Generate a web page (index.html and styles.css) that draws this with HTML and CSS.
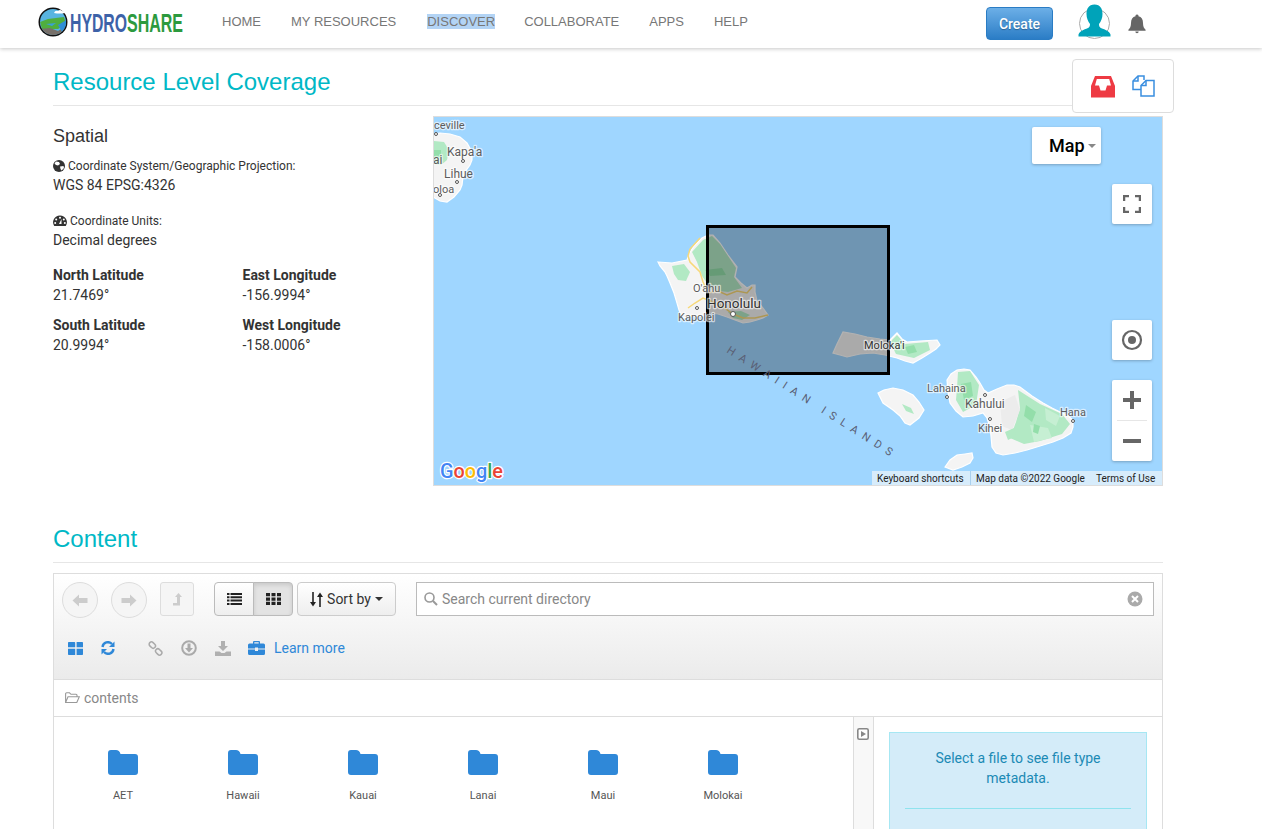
FILE: index.html
```html
<!DOCTYPE html>
<html lang="en">
<head>
<meta charset="utf-8">
<title>HydroShare - Resource Level Coverage</title>
<link rel="stylesheet" href="styles.css">
</head>
<body>
<header class="navbar">
  <a class="logo">
    <svg class="logo-svg" width="146" height="34" viewBox="0 0 146 34">
      <defs><clipPath id="globe"><circle cx="15" cy="17" r="13"/></clipPath></defs>
      <circle cx="15" cy="17" r="14.500" fill="#111"/>
      <g clip-path="url(#globe)">
        <rect x="0" y="3" width="30" height="28" fill="#58b4e0"/>
        <path d="M2 17 L10 14 L26 12 L28 19 L20 24 L4 24Z" fill="#4fae3f"/>
        <path d="M2 24 L12 23 L20 26 L28 21 L28 33 L2 33Z" fill="#77706a"/>
        <path d="M20 20 L30 14 L30 27 L24 27Z" fill="#2f8fd8"/>
        <path d="M8 19 L18 18 L14 21Z" fill="#3aa0d8"/>
      </g>
      <path d="M16 8 q1 -3 4 -2 q2 -2 4 0 q3 0 3 2 q-5 1 -11 0Z" fill="#fff"/>
      <text class="logo-text logo-hydro" x="32" y="27" textLength="57" lengthAdjust="spacingAndGlyphs">HYDRO</text>
      <text class="logo-text logo-share" x="89" y="27" textLength="56" lengthAdjust="spacingAndGlyphs">SHARE</text>
    </svg>
  </a>
  <nav class="nav-links">
    <a class="nav-link">HOME</a>
    <a class="nav-link">MY RESOURCES</a>
    <a class="nav-link"><span class="selected">DISCOVER</span></a>
    <a class="nav-link">COLLABORATE</a>
    <a class="nav-link">APPS</a>
    <a class="nav-link">HELP</a>
  </nav>
  <div class="nav-right">
    <button class="btn-create">Create</button>
    <svg class="user-icon" width="34" height="36" viewBox="0 0 34 36">
      <circle cx="16.500" cy="19.500" r="15" fill="#fff" stroke="#aaa" stroke-width="1"/>
      <path d="M16.500 0.500 C22.500 0.500 24.500 5 24.500 10 C24.500 14 23 17.500 21 20 C21 22 21.500 23.500 24 24.500 C28 26 31 27 32.500 30.500 L32.500 32.500 L0.500 32.500 L0.500 30.500 C2 27 5 26 9 24.500 C11.500 23.500 12 22 12 20 C10 17.500 8.500 14 8.500 10 C8.500 5 10.500 0.500 16.500 0.500Z" fill="#00a3b9"/>
    </svg>
    <svg class="bell-icon" width="18" height="20" viewBox="0 0 18 20">
      <path d="M9 0.500 a1.500 1.500 0 0 1 1.500 1.800 C13.500 3 15 5.500 15 9 C15 12.500 16 14.300 17.600 15.800 L17.600 16.700 L0.400 16.700 L0.400 15.800 C2 14.300 3 12.500 3 9 C3 5.500 4.500 3 7.500 2.300 A1.500 1.500 0 0 1 9 0.500Z" fill="#666"/>
      <path d="M7.300 17.500 h3.400 a1.700 1.700 0 0 1 -3.400 0Z" fill="#666"/>
    </svg>
  </div>
</header>

<aside class="float-tools">
  <svg class="inbox-icon" width="24" height="22" viewBox="0 0 24 22">
    <path d="M4 0 H20 L24 10 V21.500 H0 V10Z" fill="#ee3a43"/>
    <path d="M5.800 3 H18.200 L20 9.500 H16 L14.500 14.500 H9.500 L8 9.500 H4Z" fill="#fff"/>
  </svg>
  <svg width="23" height="22" viewBox="0 0 23 22" class="copy-icon">
    <path d="M11 14.500 H1 V6 L6 1 H12 V5"/>
    <path d="M6 1 V6 H1"/>
    <path d="M9 21 H22 V5.500 H14 L9 10.500Z" fill="#fff"/>
    <path d="M14 5.500 V10.500 H9"/>
  </svg>
</aside>

<main class="page">
  <h2 class="section-title first">Resource Level Coverage</h2>
  <section class="coverage">
    <div class="spatial">
      <h3 class="spatial-title">Spatial</h3>
      <div class="field-label">
        <svg width="12" height="12" viewBox="0 0 12 12"><circle cx="6" cy="6" r="6" fill="#333"/><path d="M3 1.500 L6 2 L7 4 L5 5.500 L3 5 L1.500 3.500Z M7 6.500 L10.500 6 L11 8 L8.500 10.500 L7.500 9Z" fill="#fff"/></svg>
        Coordinate System/Geographic Projection:
      </div>
      <div class="field-value">WGS 84 EPSG:4326</div>
      <div class="field-label units">
        <svg width="14" height="12" viewBox="0 0 14 12"><path d="M7 0.500 A6.800 6.800 0 0 1 12.800 11 H1.200 A6.800 6.800 0 0 1 7 0.500Z" fill="#333"/><circle cx="7" cy="2.800" r="1" fill="#fff"/><circle cx="3.200" cy="4.500" r="1" fill="#fff"/><circle cx="10.800" cy="4.500" r="1" fill="#fff"/><circle cx="2.200" cy="8" r="1" fill="#fff"/><circle cx="11.800" cy="8" r="1" fill="#fff"/><path d="M6 9 L8.500 4 L8.500 9Z" fill="#fff"/></svg>
        Coordinate Units:
      </div>
      <div class="field-value">Decimal degrees</div>
      <div class="coords">
        <div><div class="coord-name">North Latitude</div><div class="coord-value">21.7469°</div></div>
        <div><div class="coord-name">East Longitude</div><div class="coord-value">-156.9994°</div></div>
        <div><div class="coord-name">South Latitude</div><div class="coord-value">20.9994°</div></div>
        <div><div class="coord-name">West Longitude</div><div class="coord-value">-158.0006°</div></div>
      </div>
    </div>

    <div class="map">
      <svg class="map-canvas" width="730" height="370" viewBox="433 116 730 370">
        <defs><filter id="soft" x="-5%" y="-5%" width="110%" height="110%"><feGaussianBlur stdDeviation="0.700"/></filter></defs>
        <rect x="433" y="116" width="730" height="370" fill="#9fd6ff"/>
        <g filter="url(#soft)">
          <!-- Kauai -->
          <path class="land" d="M433 134 L440 133 L450 134 L460 137 L467 143 L472 152 L472 160 L470 165 L465 172 L463 177 L462 185 L460 190 L454 197 L447 202 L440 201 L433 197Z"/>
          <path class="green" d="M434 141 L444 142 L449 150 L447 160 L441 165 L434 164Z"/>
          <path class="green-dark" d="M434 150 L441 150 L441 157 L434 158Z"/>
          <!-- Oahu -->
          <path class="land" d="M658 262 L672 263 L687 260 L689 254 L694 246 L702 238 L708 235 L713 235 L720 243 L728 255 L737 267 L735 277 L741 283 L747 288 L752 285 L755 285 L755 292 L757 301 L763 308 L768 315 L763 318 L757 320 L750 322 L743 323 L735 320 L727 317 L718 314 L710 313 L703 316 L697 317 L690 316 L683 318 L679 310 L677 303 L674 293 L670 283 L667 276 L665 272 L660 266Z"/>
          <path class="green" d="M692 252 L703 240 L712 236 L720 244 L736 268 L734 277 L742 288 L728 292 L712 290 L702 276 L697 262Z"/>
          <path class="green-dark" d="M705 270 L722 268 L726 275 L710 276Z"/>
          <path class="green" d="M672 266 L684 264 L690 272 L686 281 L678 280 L674 274Z"/>
          <path class="green" d="M728 312 L741 311 L750 315 L742 320 L733 318Z"/>
          <path class="road" d="M700 238 L690 249 L688 256 L690 262 L700 272 L703 282 L708 293 L718 291 L727 295 L737 291 L747 293 L752 287 M688 308 L695 303 L703 298 L713 302 L723 307 L733 314 L743 318 L755 318 L768 315"/>
          <!-- Molokai -->
          <path class="land" d="M833 353 L837 344 L843 332 L855 334 L867 337 L880 339 L890 340 L897 333 L902 339 L907 342 L920 341 L937 340 L940 345 L936 349 L930 353 L922 358 L913 363 L905 361 L897 358 L885 355 L873 353 L860 354 L847 357 L840 355Z"/>
          <path class="green" d="M890 342 L897 335 L905 344 L928 342 L930 350 L914 358 L896 354Z"/>
          <path class="green-dark" d="M905 347 L914 345 L917 352 L908 354Z"/>
          <!-- Lanai -->
          <path class="land" d="M878 393 L884 390 L893 388 L903 390 L913 395 L919 402 L924 410 L919 418 L910 425 L905 423 L900 416 L893 410 L883 403Z"/>
          <path class="green" d="M902 404 L911 408 L914 414 L906 411Z"/>
          <!-- Maui -->
          <path class="land" d="M947 380 L951 374 L957 370 L964 369 L970 370 L976 377 L980 383 L984 390 L988 393 L997 389 L1007 385 L1014 385 L1020 387 L1032 396 L1043 403 L1052 408 L1060 412 L1067 415 L1073 420 L1073 427 L1071 433 L1063 438 L1053 442 L1040 446 L1027 450 L1015 453 L1003 455 L996 453 L992 447 L991 436 L990 427 L987 418 L983 413 L973 416 L963 417 L956 411 L950 403 L948 392Z"/>
          <path class="green" d="M958 372 L970 371 L979 385 L976 405 L963 412 L956 400 L957 388Z"/>
          <path class="green-dark" d="M961 384 L971 382 L973 396 L964 400Z"/>
          <path class="green" d="M1018 390 L1040 404 L1062 414 L1070 424 L1062 434 L1040 441 L1024 444 L1010 438 L1016 422 L1020 408Z"/>
          <path class="green-light" d="M1030 425 L1048 428 L1052 438 L1034 442Z M1045 408 L1060 416 L1056 426 L1046 420Z"/>
          <path class="green-dark" d="M1026 405 L1036 412 L1032 422 L1024 416Z M1034 424 L1040 426 L1038 434 L1033 432Z"/>
          <path class="grey-patch" d="M1000 402 L1015 395 L1020 410 L1012 430 L1002 426Z"/>
          <path class="green" d="M1005 432 L1014 428 L1016 436 L1008 440Z"/>
          <!-- Kahoolawe -->
          <path class="land" d="M945 467 L950 460 L957 455 L965 454 L972 453 L973 458 L970 463 L962 467 L953 470Z"/>
        </g>

        <rect x="707.500" y="226.500" width="181" height="147" fill="#000" fill-opacity="0.3" stroke="#000" stroke-width="3"/>

        <text class="place small" x="434" y="129">ceville</text>
        <text class="place mid" x="447" y="156">Kapa'a</text>
        <text class="place mid" x="444" y="178">Lihue</text>
        <text class="place small" x="433" y="193">oloa</text>
        <text class="place mid" x="433" y="164">ai</text>
        <circle class="dot" cx="463" cy="161" r="1.500"/><circle class="dot" cx="457" cy="182" r="1.500"/><circle class="dot" cx="440" cy="195" r="1.500"/><circle class="dot" cx="436" cy="134" r="1.500"/>
        <text class="place small" x="693" y="292">O'ahu</text>
        <text class="place big" x="707" y="308">Honolulu</text>
        <text class="place small" x="678" y="321">Kapolei</text>
        <circle class="dot" cx="733" cy="314" r="2.500"/><circle class="dot" cx="697" cy="308" r="1.500"/>
        <text class="place small dark" x="864" y="349">Moloka'i</text>
        <text class="place small" x="927" y="392">Lahaina</text>
        <text class="place mid" x="965" y="408">Kahului</text>
        <text class="place small" x="978" y="432">Kihei</text>
        <text class="place small" x="1060" y="416">Hana</text>
        <circle class="dot" cx="947" cy="397" r="1.500"/><circle class="dot" cx="985" cy="395" r="1.500"/><circle class="dot" cx="990" cy="419" r="1.500"/><circle class="dot" cx="1073" cy="421" r="1.500"/>
        <path id="arc" d="M726 352 L902 464" fill="none"/>
        <text class="islands"><textPath href="#arc">HAWAIIAN ISLANDS</textPath></text>
        <text class="google" x="440" y="478" textLength="63" lengthAdjust="spacingAndGlyphs"><tspan fill="#4285f4">G</tspan><tspan fill="#ea4335">o</tspan><tspan fill="#fbbc05">o</tspan><tspan fill="#4285f4">g</tspan><tspan fill="#34a853">l</tspan><tspan fill="#ea4335">e</tspan></text>
      </svg>

      <div class="map-type">Map<span class="caret"></span></div>
      <div class="map-btn fullscreen">
        <svg width="18" height="18" viewBox="0 0 18 18"><path d="M1 6V1H6M12 1H17V6M17 12V17H12M6 17H1V12" fill="none" stroke="#666" stroke-width="2.500"/></svg>
      </div>
      <div class="map-btn locate">
        <svg width="22" height="22" viewBox="0 0 22 22"><circle cx="11" cy="11" r="9" fill="none" stroke="#666" stroke-width="2.200"/><circle cx="11" cy="11" r="4" fill="#666"/></svg>
      </div>
      <div class="zoom-ctl">
        <div class="zoom-btn"><svg width="18" height="18" viewBox="0 0 18 18"><path d="M0 9H18M9 0V18" stroke="#666" stroke-width="4"/></svg></div>
        <div class="zoom-sep"></div>
        <div class="zoom-btn"><svg width="18" height="4" viewBox="0 0 18 4"><path d="M0 2H18" stroke="#666" stroke-width="4"/></svg></div>
      </div>
      <div class="credits">
        <span class="credit shortcuts">Keyboard shortcuts</span>
        <span class="credit">Map data ©2022 Google</span>
        <span class="credit terms">Terms of Use</span>
      </div>
    </div>
  </section>

  <h2 class="section-title second">Content</h2>

  <section class="browser">
    <div class="toolbar">
      <div class="tool-row">
        <button class="round-btn"><svg width="16" height="13" viewBox="0 0 16 13"><path d="M7 0.500 L0.500 6.500 L7 12.500 V9 H15.500 V4 H7Z" fill="#ccc"/></svg></button>
        <button class="round-btn next"><svg width="16" height="13" viewBox="0 0 16 13"><path d="M9 0.500 L15.500 6.500 L9 12.500 V9 H0.500 V4 H9Z" fill="#ccc"/></svg></button>
        <button class="up-btn"><svg width="9" height="13" viewBox="0 0 9 13"><path d="M5.500 0 L9 4 H7 V12.500 H0 L0 10 H4 V4 H2Z" fill="#ccc"/></svg></button>
        <div class="view-group">
          <button class="view-btn"><svg width="15" height="12" viewBox="0 0 15 12"><path d="M0 1H2.500M3.500 1H15M0 4.300H2.500M3.500 4.300H15M0 7.600H2.500M3.500 7.600H15M0 11H2.500M3.500 11H15" stroke="#222" stroke-width="2"/></svg></button>
          <button class="view-btn active"><svg width="15" height="12" viewBox="0 0 15 12"><path d="M0 0h4v3.300h-4zM5.500 0h4v3.300h-4zM11 0h4v3.300h-4zM0 4.400h4v3.300h-4zM5.500 4.400h4v3.300h-4zM11 4.400h4v3.300h-4zM0 8.700h4v3.300h-4zM5.500 8.700h4v3.300h-4zM11 8.700h4v3.300h-4z" fill="#222"/></svg></button>
        </div>
        <button class="sort-btn">
          <svg width="13" height="15" viewBox="0 0 13 15"><path d="M3 0V11" stroke="#222" stroke-width="1.600"/><path d="M0 10H6L3 14.500Z" fill="#222"/><path d="M10 15V4" stroke="#222" stroke-width="1.600"/><path d="M7 5H13L10 0.500Z" fill="#222"/></svg>
          Sort by<span class="caret dark"></span>
        </button>
        <div class="search">
          <svg width="14" height="14" viewBox="0 0 14 14"><circle cx="5.500" cy="5.500" r="4.500" fill="none" stroke="#999" stroke-width="1.600"/><path d="M9 9L13 13" stroke="#999" stroke-width="2"/></svg>
          <span class="search-text">Search current directory</span>
          <svg class="search-clear" width="16" height="16" viewBox="0 0 16 16"><circle cx="8" cy="8" r="7.500" fill="#aaa"/><path d="M5 5L11 11M11 5L5 11" stroke="#fff" stroke-width="2"/></svg>
        </div>
      </div>
      <div class="action-row">
        <svg class="act-apps" width="15" height="13" viewBox="0 0 15 13"><path d="M0.800 0h5.600a.8.8 0 0 1 .8.8v4.400h-7.200v-4.400a.8.8 0 0 1 .8-.8zM8.600 0h5.600a.8.8 0 0 1 .8.8v4.400h-6.400v-5.200zM0 6.800h7.200v6.200h-6.400a.8.8 0 0 1-.8-.8zM8.600 6.800h6.400v5.400a.8.8 0 0 1-.8.8h-5.600z" fill="#2f88d8"/></svg>
        <svg class="act-refresh" width="14" height="14" viewBox="0 0 14 14"><path d="M1.500 6 A5.500 5.500 0 0 1 11 3" fill="none" stroke="#2f88d8" stroke-width="2.400"/><path d="M13.500 0.500 V6 H8Z" fill="#2f88d8"/><path d="M12.500 8 A5.500 5.500 0 0 1 3 11" fill="none" stroke="#2f88d8" stroke-width="2.400"/><path d="M0.500 13.500 V8 H6Z" fill="#2f88d8"/></svg>
        <svg class="act-link" width="15" height="15" viewBox="0 0 15 15"><rect x="0.800" y="1.800" width="7" height="4.600" rx="2.300" transform="rotate(45 4.300 4.100)" fill="none" stroke="#aaa" stroke-width="1.500"/><rect x="7.200" y="8.600" width="7" height="4.600" rx="2.300" transform="rotate(45 10.700 10.900)" fill="none" stroke="#aaa" stroke-width="1.500"/></svg>
        <svg class="act-down" width="16" height="16" viewBox="0 0 16 16"><circle cx="8" cy="8" r="6.800" fill="none" stroke="#aaa" stroke-width="2"/><path d="M6.500 3.500H9.500V8H12L8 12.500L4 8H6.500Z" fill="#aaa"/></svg>
        <svg class="act-save" width="16" height="15" viewBox="0 0 16 15"><path d="M6 0H10V5H13L8 10L3 5H6Z M0 10.500H4.500L6.500 12H9.500L11.500 10.500H16V15H0Z" fill="#b0b0b0"/></svg>
        <svg class="act-case" width="17" height="14" viewBox="0 0 17 14"><path d="M6 0H11A1 1 0 0 1 12 1V2.500H15.500A1.500 1.500 0 0 1 17 4V7.500H10V6.500H7V7.500H0V4A1.500 1.500 0 0 1 1.500 2.500H5V1A1 1 0 0 1 6 0ZM6.300 1.300V2.500H10.700V1.300Z M0 8.500H7V10H10V8.500H17V12.500A1.500 1.500 0 0 1 15.500 14H1.500A1.500 1.500 0 0 1 0 12.500Z" fill="#2f88d8" fill-rule="evenodd"/></svg>
        <a class="learn-more">Learn more</a>
      </div>
    </div>

    <div class="crumbs">
      <svg width="15" height="12" viewBox="0 0 15 12"><path d="M0.600 10.500V1.800A1 1 0 0 1 1.600 0.800H4.500L6 2.300H11A1 1 0 0 1 12 3.300V4.800M0.600 10.500L3 4.800H14.300L11.800 10.500Z" fill="none" stroke="#999" stroke-width="1.100"/></svg>
      contents
    </div>

    <div class="browser-body">
      <div class="files">
        <div class="file"><svg class="folder" width="30" height="25" viewBox="0 0 30 25"><path d="M3 0H8C10 0 12 1.500 12.500 4H27A3 3 0 0 1 30 7V22A3 3 0 0 1 27 25H3A3 3 0 0 1 0 22V3A3 3 0 0 1 3 0Z"/></svg><span class="file-name">AET</span></div>
        <div class="file"><svg class="folder" width="30" height="25" viewBox="0 0 30 25"><path d="M3 0H8C10 0 12 1.500 12.500 4H27A3 3 0 0 1 30 7V22A3 3 0 0 1 27 25H3A3 3 0 0 1 0 22V3A3 3 0 0 1 3 0Z"/></svg><span class="file-name">Hawaii</span></div>
        <div class="file"><svg class="folder" width="30" height="25" viewBox="0 0 30 25"><path d="M3 0H8C10 0 12 1.500 12.500 4H27A3 3 0 0 1 30 7V22A3 3 0 0 1 27 25H3A3 3 0 0 1 0 22V3A3 3 0 0 1 3 0Z"/></svg><span class="file-name">Kauai</span></div>
        <div class="file"><svg class="folder" width="30" height="25" viewBox="0 0 30 25"><path d="M3 0H8C10 0 12 1.500 12.500 4H27A3 3 0 0 1 30 7V22A3 3 0 0 1 27 25H3A3 3 0 0 1 0 22V3A3 3 0 0 1 3 0Z"/></svg><span class="file-name">Lanai</span></div>
        <div class="file"><svg class="folder" width="30" height="25" viewBox="0 0 30 25"><path d="M3 0H8C10 0 12 1.500 12.500 4H27A3 3 0 0 1 30 7V22A3 3 0 0 1 27 25H3A3 3 0 0 1 0 22V3A3 3 0 0 1 3 0Z"/></svg><span class="file-name">Maui</span></div>
        <div class="file"><svg class="folder" width="30" height="25" viewBox="0 0 30 25"><path d="M3 0H8C10 0 12 1.500 12.500 4H27A3 3 0 0 1 30 7V22A3 3 0 0 1 27 25H3A3 3 0 0 1 0 22V3A3 3 0 0 1 3 0Z"/></svg><span class="file-name">Molokai</span></div>
      </div>
      <div class="splitter">
        <svg width="12" height="12" viewBox="0 0 12 12"><rect x="0.800" y="0.800" width="10.400" height="10.400" rx="1.500" fill="#fff" stroke="#888" stroke-width="1.600"/><path d="M4 3L9 6L4 9Z" fill="#888"/></svg>
      </div>
      <div class="meta">
        <div class="meta-alert">
          <p class="meta-text">Select a file to see file type metadata.</p>
          <hr class="meta-rule">
        </div>
      </div>
    </div>
  </section>
</main>
</body>
</html>
```

FILE: styles.css
```css
* { box-sizing: border-box; }
html, body { height: 100%; margin: 0; overflow: hidden; background: #fff; }
body { font-family: Roboto, "Liberation Sans", sans-serif; font-size: 14px; color: #333; position: relative; }
button { font-family: inherit; margin: 0; padding: 0; }

.navbar { height: 48px; display: flex; align-items: center; padding-left: 38px; background: #fff; box-shadow: 0 1px 4px rgba(0,0,0,.22); position: relative; z-index: 2; }
.logo { width: 169px; height: 34px; display: block; margin-top: -4px; }
.logo-svg { overflow: visible; }
.logo-text { font-family: "Liberation Sans", sans-serif; font-weight: 700; font-size: 26px; }
.logo-hydro { fill: #3d62a8; }
.logo-share { fill: #2c9a3e; }
.nav-links { display: flex; font-family: "Liberation Sans", Arial, sans-serif; font-size: 13px; color: #777; margin-top: -5px; }
.nav-link { padding: 0 15px; line-height: 20px; }
.selected { background: #b3d4f5; margin-left: 1px; margin-right: -1px; }
.nav-right { margin-left: auto; display: flex; align-items: center; margin-right: 116px; margin-top: -4px; }
.btn-create { width: 67px; height: 33px; border: 1px solid #2a7cc4; border-radius: 4px; background: linear-gradient(#6cafe7, #2b7dc6); color: #fff; font-size: 14px; font-weight: 500; text-shadow: 0 1px 1px rgba(0,0,0,.3); margin-top: 3px; }
.user-icon { margin-left: 25px; }
.bell-icon { margin-left: 16px; margin-top: 4px; }

.float-tools { position: absolute; left: 1072px; top: 59px; width: 102px; height: 54px; display: flex; align-items: center; gap: 17px; padding-left: 18px; background: #fff; border: 1px solid #ddd; border-radius: 4px; z-index: 3; }
.inbox-icon { margin-top: 2px; }
.copy-icon { fill: none; stroke: #3a8ee0; stroke-width: 1.500; }

.page { width: 1110px; margin-left: 53px; }
.section-title { margin: 0; font-family: "Liberation Sans", Arial, sans-serif; font-weight: 400; font-size: 24px; line-height: 26px; color: #00b8c6; padding-bottom: 10px; border-bottom: 1px solid #e6e6e6; }
.section-title.first { margin-top: 21px; }
.section-title.second { margin-top: 40px; }

.coverage { display: flex; margin-top: 10px; }
.spatial { width: 380px; flex: none; }
.spatial-title { margin: 9px 0 0; font-family: "Liberation Sans", Arial, sans-serif; font-weight: 400; font-size: 18px; line-height: 22px; color: #333; }
.field-label { margin-top: 10px; font-size: 12px; line-height: 18px; color: #333; display: flex; align-items: center; gap: 3px; height: 18px; }
.field-label.units { margin-top: 17px; }
.field-value { font-size: 14px; line-height: 20px; color: #333; }
.coords { display: grid; grid-template-columns: 189.500px 1fr; row-gap: 10px; margin-top: 15px; }
.coord-name { font-weight: 700; font-size: 14px; line-height: 20px; }
.coord-value { font-size: 14px; line-height: 20px; }

.map { position: relative; width: 730px; height: 370px; flex: none; overflow: hidden; }
.map::after { content: ""; position: absolute; inset: 0; box-shadow: inset 0 0 0 1px #ddd; pointer-events: none; }
.map-canvas { display: block; }
.land { fill: #f4f4f4; stroke: #fff; stroke-width: 1.200; }
.green { fill: #b2e9c4; }
.green-dark { fill: #93deaa; }
.green-light { fill: #c6efd3; }
.grey-patch { fill: #ececec; }
.road { fill: none; stroke: #f7d878; stroke-width: 1.500; }
.place { font-family: Roboto, sans-serif; fill: #5c5c5c; stroke: #fff; stroke-width: 2.500; stroke-opacity: .6; paint-order: stroke; stroke-linejoin: round; }
.place.small { font-size: 11px; }
.place.mid { font-size: 12px; }
.place.big { font-size: 13.500px; fill: #333; }
.place.dark { fill: #333; }
.dot { fill: #fff; stroke: #555; stroke-width: 1; }
.islands { font-family: Roboto, sans-serif; font-size: 11px; letter-spacing: 6.300px; fill: #5a5f75; }
.google { font-family: Roboto, sans-serif; font-size: 21px; font-weight: 500; stroke: #fff; stroke-width: 2.500; paint-order: stroke; stroke-linejoin: round; }

.map-type { position: absolute; left: 599px; top: 11px; width: 69px; height: 37px; background: #fff; border-radius: 2px; box-shadow: 0 1px 3px rgba(0,0,0,.25); font-size: 18px; font-weight: 500; color: #000; display: flex; align-items: center; padding-left: 17px; }
.caret { display: inline-block; border-left: 4px solid transparent; border-right: 4px solid transparent; border-top: 4px solid #888; margin-left: 3px; }
.caret.dark { border-top-color: #333; margin-left: 0; }
.map-btn { position: absolute; left: 679px; width: 40px; height: 40px; background: #fff; border-radius: 2px; box-shadow: 0 1px 3px rgba(0,0,0,.25); display: flex; align-items: center; justify-content: center; }
.fullscreen { top: 68px; }
.locate { top: 204px; }
.zoom-ctl { position: absolute; left: 679px; top: 264px; width: 40px; height: 81px; background: #fff; border-radius: 2px; box-shadow: 0 1px 3px rgba(0,0,0,.25); display: flex; flex-direction: column; align-items: center; }
.zoom-btn { height: 40px; width: 100%; display: flex; align-items: center; justify-content: center; }
.zoom-sep { height: 1px; width: 30px; background: #e6e6e6; }
.credits { position: absolute; right: 1px; bottom: 0; height: 15px; width: 290px; display: flex; font-size: 10px; line-height: 15px; color: #222; }
.credit { background: #d7ecfb; padding-left: 5px; padding-right: 6px; white-space: nowrap; }
.shortcuts { border-right: 1px solid #a9d0ee; width: 99px; }
.credit:nth-child(2) { width: 120px; }
.terms { flex: 1; }

.browser { margin-top: 10px; border: 1px solid #ddd; border-bottom: 0; height: 260px; overflow: hidden; }
.toolbar { height: 106px; background: linear-gradient(#fff, #ebebeb); border-bottom: 1px solid #ddd; padding: 8px 8px 0; position: relative; }
.tool-row { display: flex; align-items: flex-start; }
.round-btn { width: 36px; height: 36px; border-radius: 50%; border: 1px solid #ddd; background: #f5f5f5; display: flex; align-items: center; justify-content: center; }
.round-btn.next { margin-left: 13px; }
.up-btn { width: 34px; height: 34px; margin-left: 13px; border: 1px solid #ddd; border-radius: 3px; background: #f5f5f5; display: flex; align-items: center; justify-content: center; }
.view-group { display: flex; margin-left: 20px; height: 34px; }
.view-btn { width: 40px; height: 34px; border: 1px solid #bbb; background: linear-gradient(#fff, #eee); display: flex; align-items: center; justify-content: center; border-radius: 4px 0 0 4px; }
.view-btn.active { width: 40px; margin-left: -1px; background: #e3e3e3; border-radius: 0 4px 4px 0; box-shadow: inset 0 2px 4px rgba(0,0,0,.12); }
.sort-btn { width: 99px; height: 34px; margin-left: 4px; border: 1px solid #ccc; border-radius: 4px; background: linear-gradient(#fff, #eee); font-size: 14px; color: #333; display: flex; align-items: center; justify-content: center; gap: 4px; }
.search { width: 738px; height: 34px; margin-left: 20px; border: 1px solid #bbb; background: #fff; display: flex; align-items: center; padding: 0 10px 0 7px; gap: 4px; }
.search-text { color: #888; font-size: 14px; }
.search-clear { margin-left: auto; }
.action-row { display: flex; align-items: center; margin-top: 21px; height: 18px; padding-left: 6px; }
.act-refresh { margin-left: 18px; }
.act-link { margin-left: 33px; }
.act-down { margin-left: 18px; }
.act-save { margin-left: 18px; }
.act-case { margin-left: 17px; }
.learn-more { margin-left: 9px; color: #2f88d8; font-size: 14px; }

.crumbs { height: 37px; border-bottom: 1px solid #ddd; display: flex; align-items: center; gap: 4px; padding-left: 11px; color: #888; font-size: 14px; }

.browser-body { display: flex; height: 120px; }
.files { width: 799px; flex: none; display: grid; grid-template-columns: repeat(6, 120px); padding: 33px 0 0 9px; align-content: start; }
.file { display: flex; flex-direction: column; align-items: center; }
.folder { fill: #2f88d8; }
.file-name { font-size: 11px; color: #555; margin-top: 14px; line-height: 14px; }
.splitter { width: 21px; flex: none; background: #f8f8f8; border-left: 1px solid #ddd; border-right: 1px solid #ddd; padding: 10px 0 0 3px; }
.meta { flex: 1; padding: 15px 15px 0; }
.meta-alert { background: #d4ecf9; border: 1px solid #a6e7f3; height: 200px; padding: 15px 15px 0; color: #1b8ab5; }
.meta-text { margin: 0; text-align: center; font-size: 14px; line-height: 20px; padding: 0 20px; }
.meta-rule { border: 0; border-top: 1px solid #8fe3ee; margin: 20px 0 0; }
```
